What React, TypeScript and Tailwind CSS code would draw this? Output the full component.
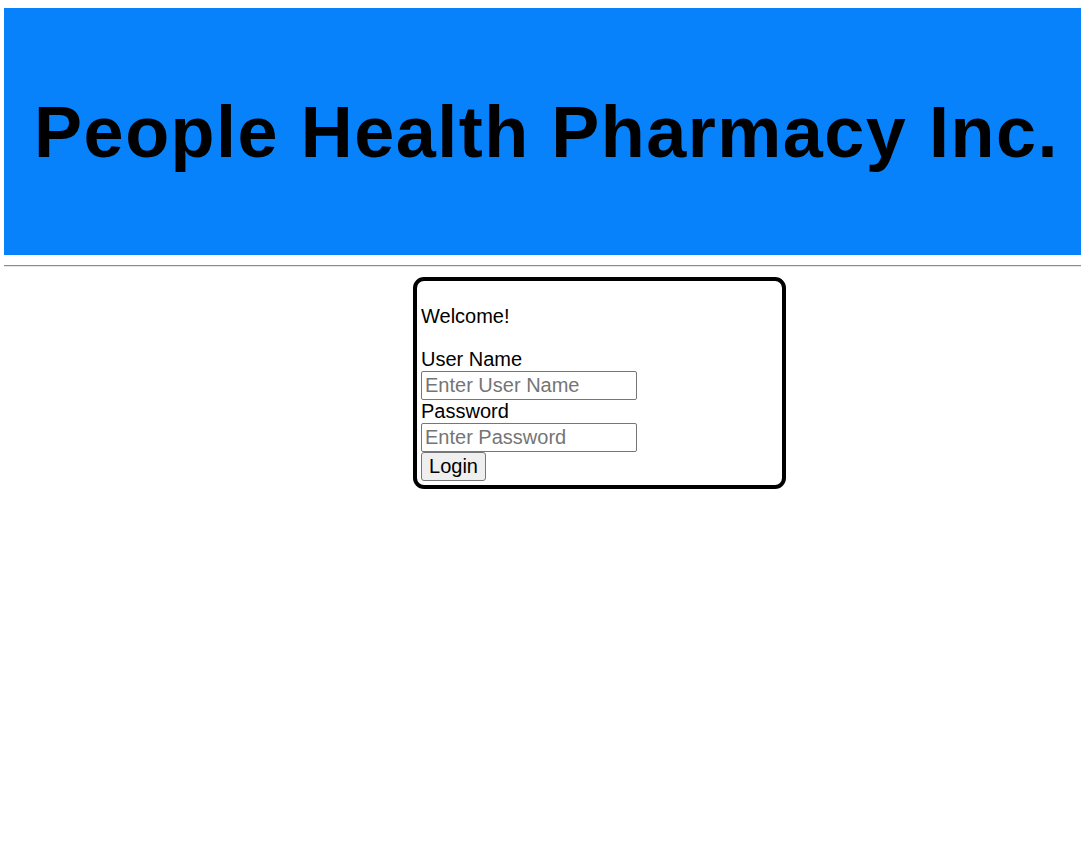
import React from 'react'

const LoginCard = () => (
  <form
    className="ml-[409px] w-[373px] rounded-[11px] border-4 border-black p-[4px] text-[20px] leading-[23px]"
    onSubmit={(e) => e.preventDefault()}
  >
    <p className="my-[20px]">Welcome!</p>
    <label className="block" htmlFor="username">User Name</label>
    <input
      id="username"
      type="text"
      placeholder="Enter User Name"
      className="block h-[29px] w-[216px] rounded-[2px] border border-[#767676] px-[3px] text-[20px] placeholder:text-[#757575]"
    />
    <label className="block" htmlFor="password">Password</label>
    <input
      id="password"
      type="password"
      placeholder="Enter Password"
      className="block h-[29px] w-[216px] rounded-[2px] border border-[#767676] px-[3px] text-[20px] placeholder:text-[#757575]"
    />
    <button
      type="submit"
      className="block h-[29px] w-[65px] rounded-[3px] border border-[#767676] bg-[#efefef] text-[20px]"
    >
      Login
    </button>
  </form>
)

export default function App() {
  return (
    <div className="min-h-screen overflow-x-hidden bg-white pl-[4px] pt-[8px] font-['Liberation_Sans',Arial,sans-serif] text-black">
      <header className="flex h-[247px] w-[1085px] items-center justify-center bg-[#0782fb]">
        <h1 className="text-[72px] font-bold leading-none tracking-[1.5px]">People Health Pharmacy Inc.</h1>
      </header>
      <div className="mb-[10px] mt-[10px] border-t border-b border-t-[#8c8c8c] border-b-[#e6e6e6]" />
      <LoginCard />
    </div>
  )
}
